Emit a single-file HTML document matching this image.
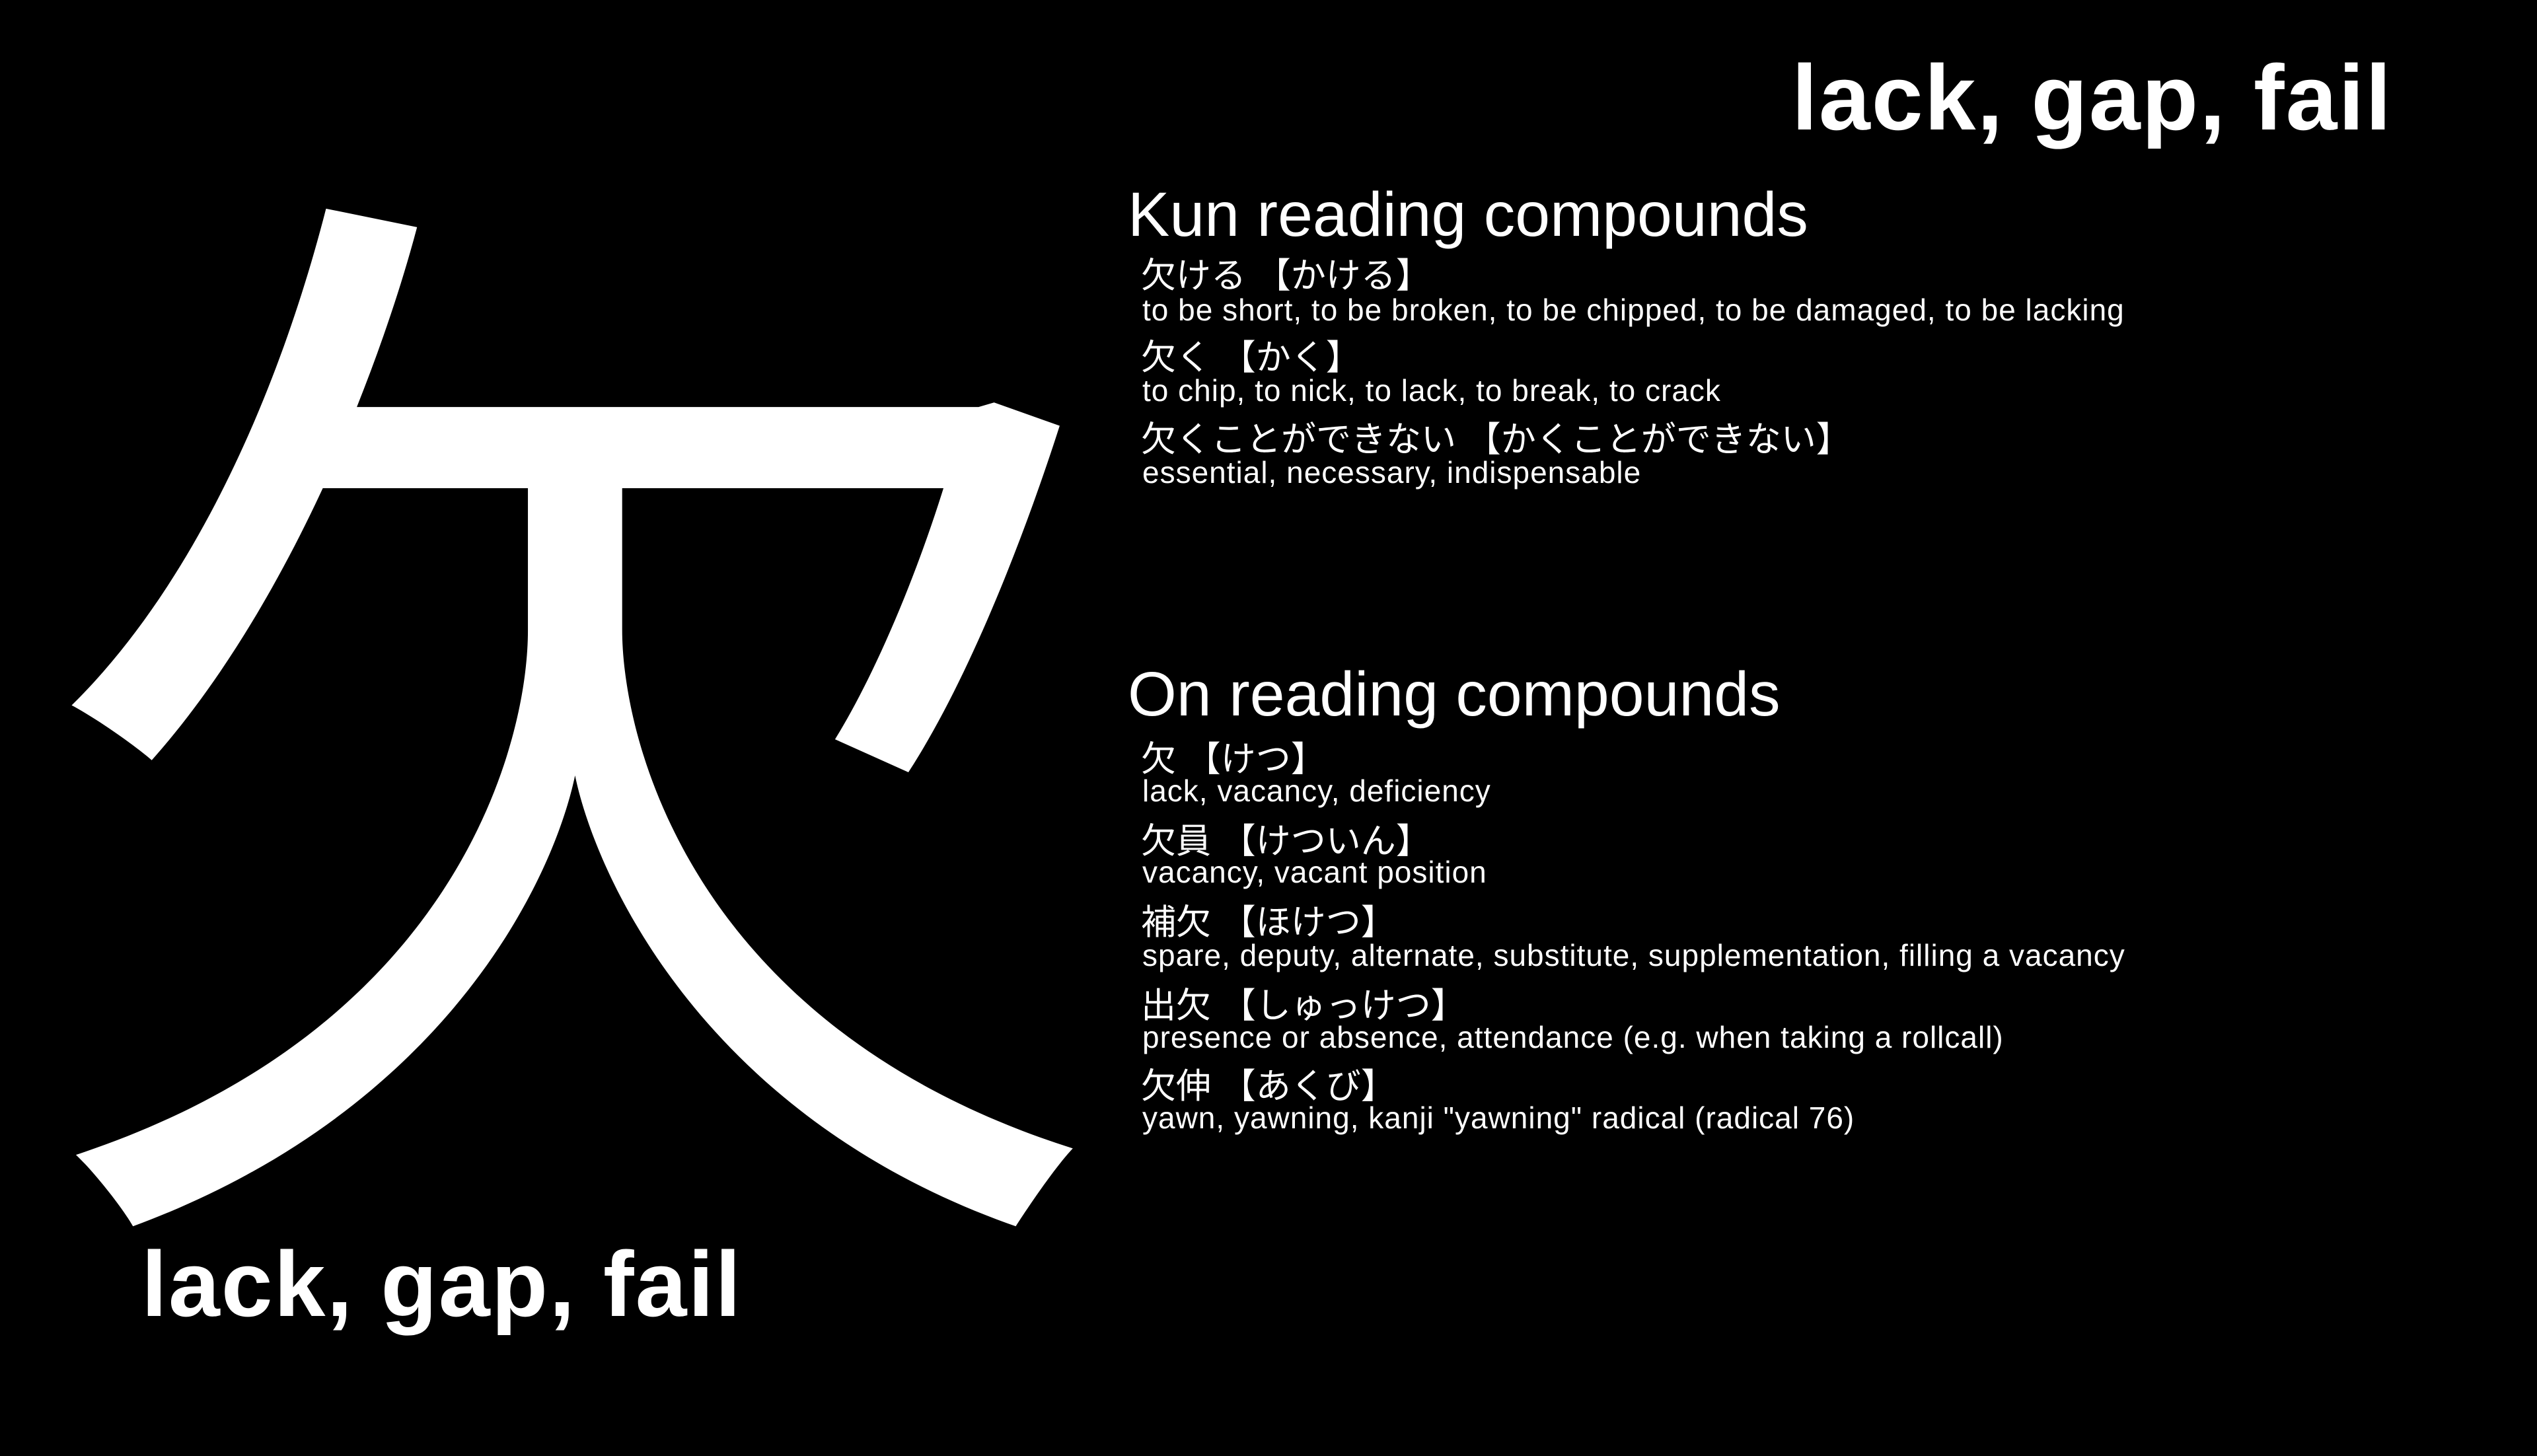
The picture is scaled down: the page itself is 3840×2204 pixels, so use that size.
<!DOCTYPE html>
<html><head><meta charset="utf-8"><style>
html,body{margin:0;padding:0;background:#000;}
body{width:3840px;height:2160px;position:relative;overflow:hidden;color:#fff;font-family:"Liberation Sans","Noto Sans CJK JP",sans-serif;}
.a{position:absolute;white-space:nowrap;}
.big{font-family:"Noto Sans CJK JP",sans-serif;font-size:1660px;line-height:1660px;left:42px;top:172px;}
.t{font-weight:bold;font-size:140px;line-height:140px;letter-spacing:2px;}
.h{font-size:95px;line-height:95px;left:1707px;}
.j{font-size:53px;line-height:53px;left:1727px;}
.e{font-size:46px;line-height:46px;left:1729px;letter-spacing:1px;}
</style></head><body>
<div class="a big">欠</div>
<div class="a t" style="left:2712px;top:78px;">lack, gap, fail</div>
<div class="a t" style="left:214px;top:1874px;">lack, gap, fail</div>

<div class="a h" style="top:278px;">Kun reading compounds</div>
<div class="a j" style="top:391px;">欠ける 【かける】</div>
<div class="a e" style="top:446px;">to be short, to be broken, to be chipped, to be damaged, to be lacking</div>
<div class="a j" style="top:515px;">欠く 【かく】</div>
<div class="a e" style="top:568px;">to chip, to nick, to lack, to break, to crack</div>
<div class="a j" style="top:639px;">欠くことができない 【かくことができない】</div>
<div class="a e" style="top:692px;">essential, necessary, indispensable</div>

<div class="a h" style="top:1004px;">On reading compounds</div>
<div class="a j" style="top:1123px;">欠 【けつ】</div>
<div class="a e" style="top:1174px;">lack, vacancy, deficiency</div>
<div class="a j" style="top:1247px;">欠員 【けついん】</div>
<div class="a e" style="top:1297px;">vacancy, vacant position</div>
<div class="a j" style="top:1370px;">補欠 【ほけつ】</div>
<div class="a e" style="top:1423px;">spare, deputy, alternate, substitute, supplementation, filling a vacancy</div>
<div class="a j" style="top:1496px;">出欠 【しゅっけつ】</div>
<div class="a e" style="top:1547px;">presence or absence, attendance (e.g. when taking a rollcall)</div>
<div class="a j" style="top:1618px;">欠伸 【あくび】</div>
<div class="a e" style="top:1669px;">yawn, yawning, kanji "yawning" radical (radical 76)</div>
</body></html>
